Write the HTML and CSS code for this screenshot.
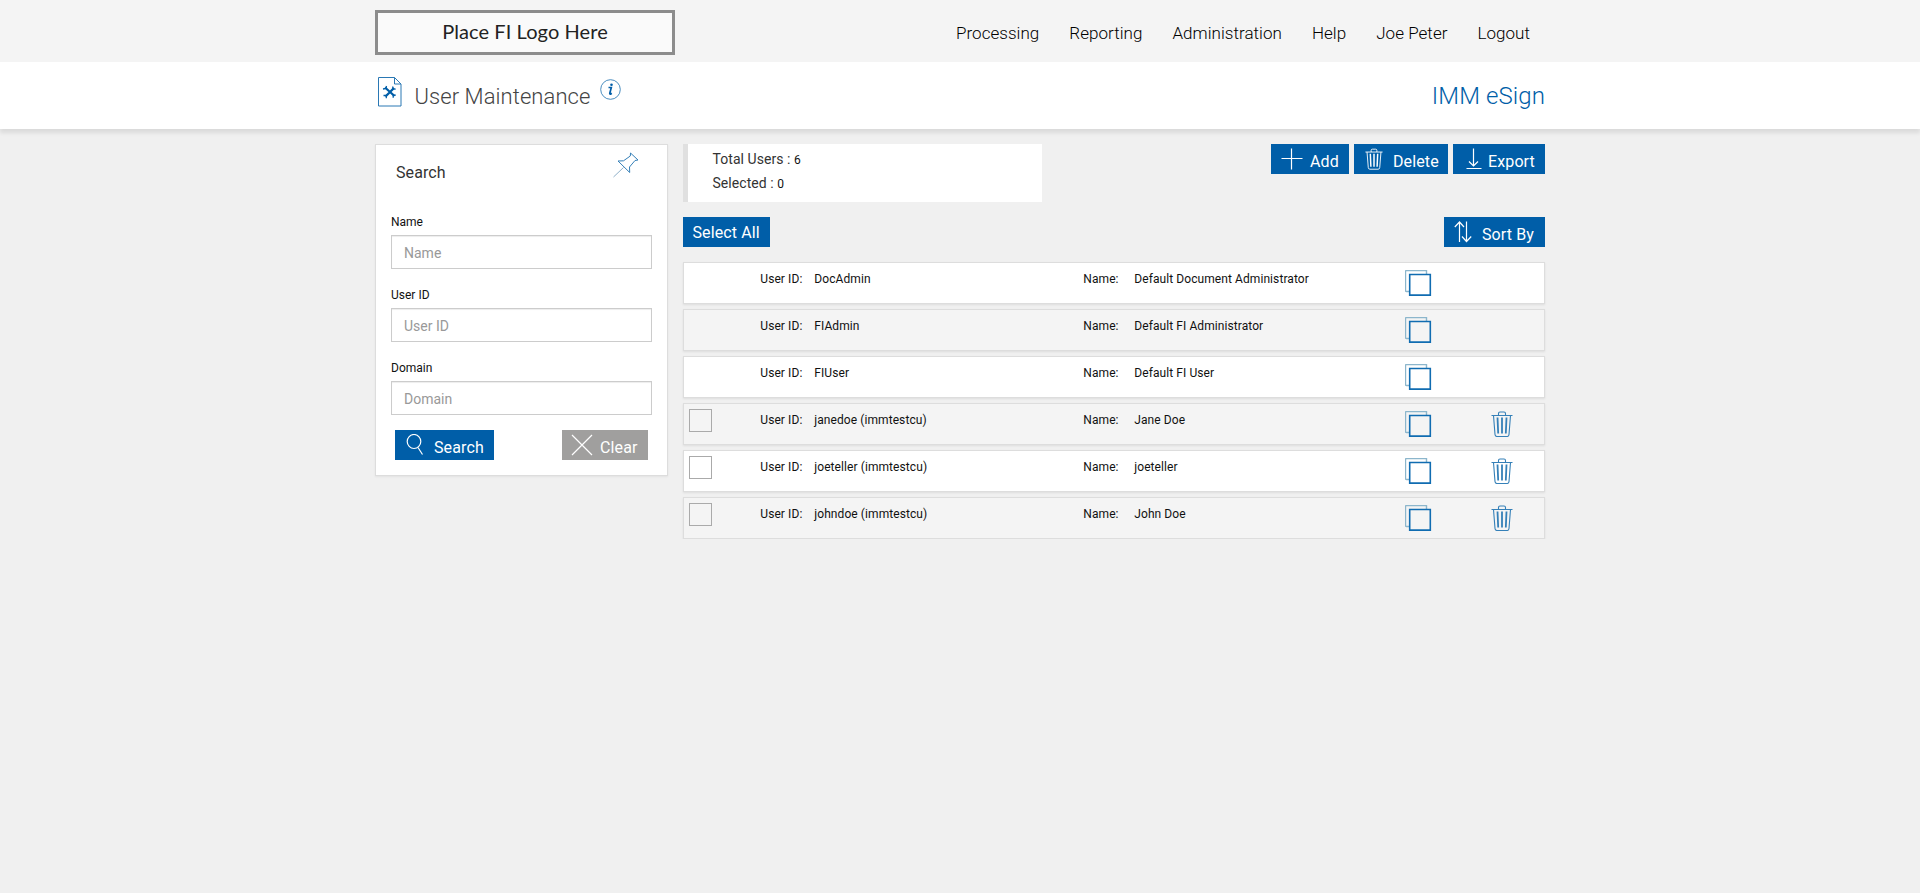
FILE: index.html
```html
<!DOCTYPE html>
<html lang="en">
<head>
<meta charset="utf-8">
<title>User Maintenance</title>
<link rel="stylesheet" href="styles.css">
</head>
<body>
<svg class="defs" width="0" height="0" aria-hidden="true">
  <symbol id="trash" viewBox="0 0 22 26"><path d="M.5 4.500h21M7.500 4.500V2.500q0-1.500 1.500-1.500h4q1.500 0 1.500 1.500v2M2.500 4.500l1.500 19q.2 2 2 2h10q1.800 0 2-2l1.500-19"/><path class="slats" d="M6.500 6.500l.7 16M11 6.500v16M15.500 6.500l-.7 16"/></symbol>
  <symbol id="copy" viewBox="0 0 27 27"><path class="back" d="M4 21.500H1.500q-1 0-1-1v-19q0-1 1-1h20v3.500"/><path class="front" d="M4.700 4.500h20.600v20.600H4.700z"/></symbol>
</svg>
<header class="topbar">
  <div class="wrap topbar-in">
    <div class="logo">Place FI Logo Here</div>
    <nav class="nav"><a>Processing</a><a>Reporting</a><a>Administration</a><a>Help</a><a>Joe Peter</a><a>Logout</a></nav>
  </div>
</header>
<div class="titlebar">
  <div class="wrap titlebar-in">
    <svg class="doc-icon" width="24" height="30" viewBox="0 0 24 30"><path d="M.5.500h16l6.500 6.500v22H.5zM16.500.500v6.500h6.500" fill="none" stroke="#2a78b4"/><path d="M7 10.500l9.500 8.500M7.500 19.500l8.500-8.500" stroke="#005ea8" stroke-width="2.300"/><path d="M5 12l3-.5.500-2.500M14.700 9.500l.3 2.500 2.700.2M5.500 18.500h2.800v2.700M15.200 20.800v-2.600h2.600" stroke="#005ea8" stroke-width="1.300" fill="none"/></svg>
    <h1 class="title">User Maintenance</h1>
    <svg class="info-icon" width="21" height="21" viewBox="0 0 21 21"><circle cx="10.500" cy="10.500" r="9.800" fill="none" stroke="#3580b8" stroke-width=".9"/><path d="M8.500 8.500h2.800l-1.500 5.800q-.2 1 .8.800l1.200-.8" fill="none" stroke="#005ea8" stroke-width="1.700"/><circle cx="11.500" cy="5.700" r="1.300" fill="#005ea8"/></svg>
    <span class="brand">IMM eSign</span>
  </div>
</div>
<main class="wrap main">
  <aside class="panel">
    <div class="panel-head"><span>Search</span>
      <svg width="26" height="26" viewBox="0 0 26 26" fill="none" stroke="#3580b8" stroke-width="1"><path d="M17.500 1l7.500 7-3 .5-5.500 6.500.2 5.500L5 9l5.500-.2L17.300 4z"/><path d="M10.500 15.500L.5 25" stroke="#8fb0c8"/></svg>
    </div>
    <label class="field"><span>Name</span><input type="text" placeholder="Name"></label>
    <label class="field"><span>User ID</span><input type="text" placeholder="User ID"></label>
    <label class="field"><span>Domain</span><input type="text" placeholder="Domain"></label>
    <div class="panel-actions">
      <button class="btn b-search"><svg width="18" height="22" viewBox="0 0 18 22"><ellipse cx="8" cy="7.500" rx="6.800" ry="7"/><path d="M12 13.500L16.500 20.500"/></svg><span>Search</span></button>
      <button class="btn b-clear"><svg width="22" height="22" viewBox="0 0 22 22"><path d="M1 1l20 20M21 1L1 21"/></svg><span>Clear</span></button>
    </div>
  </aside>
  <section class="content">
    <div class="summary-row">
      <div class="summary"><div>Total Users : <b>6</b></div><div>Selected : <b>0</b></div></div>
      <div class="actions">
        <button class="btn b-add"><svg width="22" height="22" viewBox="0 0 22 22"><path d="M.5 10.500h21M10.500.5v21"/></svg><span>Add</span></button>
        <button class="btn b-delete"><svg width="18" height="22"><use href="#trash"/></svg><span>Delete</span></button>
        <button class="btn b-export"><svg width="16" height="22" viewBox="0 0 16 22"><path d="M7.500.5v17.500M3 13.500l4.500 4.500 4.500-4.500M.5 20.500h15"/></svg><span>Export</span></button>
      </div>
    </div>
    <div class="sort-row">
      <button class="btn b-all"><span>Select All</span></button>
      <button class="btn b-sort"><svg width="18" height="22" viewBox="0 0 18 22"><path d="M5.500 21V1M.8 6l4.700-5 4.500 5M12.500.5v20M8 15.500l4.500 5 4.700-5"/></svg><span>Sort By</span></button>
    </div>
    <div class="rows">
      <div class="row"><i></i><span>User ID:</span><span>DocAdmin</span><span>Name:</span><span>Default Document Administrator</span><svg class="copy"><use href="#copy"/></svg></div>
      <div class="row"><i></i><span>User ID:</span><span>FIAdmin</span><span>Name:</span><span>Default FI Administrator</span><svg class="copy"><use href="#copy"/></svg></div>
      <div class="row"><i></i><span>User ID:</span><span>FIUser</span><span>Name:</span><span>Default FI User</span><svg class="copy"><use href="#copy"/></svg></div>
      <div class="row"><i class="check"></i><span>User ID:</span><span>janedoe (immtestcu)</span><span>Name:</span><span>Jane Doe</span><svg class="copy"><use href="#copy"/></svg><svg class="trash"><use href="#trash"/></svg></div>
      <div class="row"><i class="check"></i><span>User ID:</span><span>joeteller (immtestcu)</span><span>Name:</span><span>joeteller</span><svg class="copy"><use href="#copy"/></svg><svg class="trash"><use href="#trash"/></svg></div>
      <div class="row"><i class="check"></i><span>User ID:</span><span>johndoe (immtestcu)</span><span>Name:</span><span>John Doe</span><svg class="copy"><use href="#copy"/></svg><svg class="trash"><use href="#trash"/></svg></div>
    </div>
  </section>
</main>
</body>
</html>
```
FILE: styles.css
```css
* { box-sizing: border-box; }
body { margin: 0; background: #f0f0f0; font: 12px/18px Roboto, sans-serif; color: #111; }
.defs { display: block; height: 0; }
.wrap { width: 1170px; margin: 0 auto; }
.topbar { height: 62px; background: #f4f4f4; }
.topbar-in { display: flex; justify-content: space-between; padding-top: 10px; }
.logo { width: 300px; height: 45px; border: 3px solid #8c8c8c; background: #fafafa; font: 20px/36px Lato, sans-serif; letter-spacing: .08px; text-align: center; color: #222; }
.nav { display: flex; gap: 30px; padding: 11px 15px 0 0; font-size: 17px; line-height: 24px; font-weight: 300; letter-spacing: .04px; color: #000; }
.titlebar { height: 67px; background: #fff; box-shadow: 0 4px 4px rgba(0,0,0,.09); }
.titlebar-in { display: flex; align-items: flex-start; }
.doc-icon { margin: 15px 0 0 3px; }
.title { margin: 19px 0 0 12.500px; font-size: 22px; line-height: 32px; font-weight: 300; letter-spacing: .07px; color: #444; }
.info-icon { margin: 17px 0 0 9.500px; }
.brand { margin: 18px 0 0 auto; font-size: 24px; line-height: 32px; font-weight: 300; letter-spacing: .1px; color: #005ea8; }
.main { display: flex; gap: 15px; align-items: flex-start; padding-top: 15px; }
.panel { width: 293px; height: 332px; padding: 0 15px; border: 1px solid #ddd; background: #fff; box-shadow: 0 1px 2px rgba(0,0,0,.06); }
.panel-head { display: flex; justify-content: space-between; height: 67px; padding: 7px 13px 0 5px; font-size: 16px; line-height: 42px; letter-spacing: .1px; color: #333; }
.field { display: block; height: 73px; color: #111; }
.field:nth-of-type(3) { height: 72px; }
.field span { display: block; height: 23px; line-height: 20px; }
.field input { display: block; width: 261px; height: 34px; padding: 1px 12px 0; border: 1px solid #ccc; font: 14px Roboto, sans-serif; box-shadow: inset 0 1px 1px rgba(0,0,0,.075); }
.field input::placeholder { color: #999; }
.panel-actions { display: flex; justify-content: space-between; padding: 0 4px; }
.btn { display: flex; align-items: flex-start; height: 30px; padding: 4px 0 0; border: 0; background: #005ea8; color: #fff; font: 16px/28px Roboto, sans-serif; letter-spacing: .12px; white-space: nowrap; }
.btn svg { flex: none; fill: none; stroke: #fff; stroke-width: 1.2; }
.b-search { width: 99px; padding-left: 11px; gap: 10px; }
.b-clear { width: 86px; padding-left: 9px; gap: 7px; background: #a09f9e; }
.b-add { width: 78px; padding-left: 10px; gap: 7px; }
.b-delete { width: 94px; padding-left: 11px; gap: 10px; }
.b-export { width: 92px; padding-left: 13px; gap: 6px; }
.b-all { width: 87px; padding: 2px 0 0 9.500px; }
.b-sort { width: 101px; padding-left: 10px; gap: 10px; }
.content { width: 862px; }
.summary-row { display: flex; justify-content: space-between; height: 73px; }
.summary { width: 359px; height: 58px; padding: 3px 0 0 24.500px; border-left: 5px solid #e0e0e0; background: #fff; font-size: 14px; line-height: 24px; letter-spacing: .05px; color: #333; }
.summary div + div { margin-top: -1px; }
.summary b { font-size: 12px; font-weight: 400; color: #111; }
.actions { display: flex; gap: 5px; }
.sort-row { display: flex; justify-content: space-between; height: 45px; }
.rows { display: grid; gap: 5px; }
.row { display: grid; grid-template-columns: 71.300px 54px 269px 51px 270.700px 86px 1fr; align-items: start; height: 42px; padding: 7px 0 0 5px; border: 1px solid #ddd; background: #fff; box-shadow: 0 1px 2px rgba(0,0,0,.08); letter-spacing: .08px; }
.row:nth-child(even) { background: #f4f4f4; }
.check { width: 23px; height: 23px; margin-top: -2px; border: 1px solid #aaa; }
.copy { width: 27px; height: 27px; fill: none; }
.back { stroke: #8cb6cc; stroke-width: 1.4; }
.front { stroke: #106cb1; stroke-width: 1.6; }
.trash { width: 22px; height: 26px; fill: none; stroke: #3580b8; }
.trash, .b-delete svg { stroke-width: 1.1; }
.slats { stroke-width: 1.8; }
```
